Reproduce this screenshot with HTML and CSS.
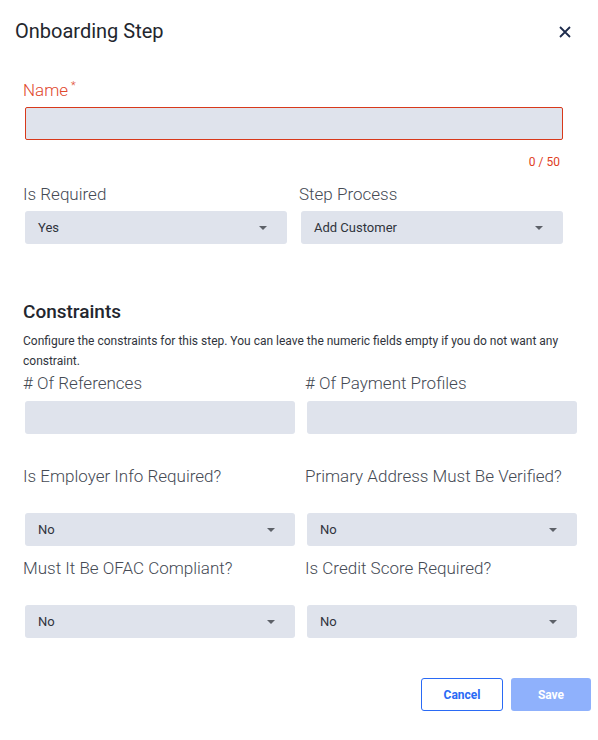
FILE: index.html
```html
<!DOCTYPE html>
<html lang="en">
<head>
<meta charset="utf-8">
<title>Onboarding Step</title>
<link rel="stylesheet" href="styles.css">
</head>
<body>
<div class="dialog">
  <div class="header">
    <h1 class="title">Onboarding Step</h1>
    <button class="close" aria-label="Close">
      <svg width="12" height="12" viewBox="0 0 12 12"><path d="M1 1 L11 11 M11 1 L1 11" stroke="#1d2b4c" stroke-width="1.8" fill="none"/></svg>
    </button>
  </div>

  <div class="top">
    <label class="label label-error">Name<span class="req">*</span></label>
    <div class="input input-error"></div>
    <div class="counter">0 / 50</div>

    <div class="row2">
      <div class="field">
        <label class="label">Is Required</label>
        <div class="select"><span>Yes</span><i class="caret"></i></div>
      </div>
      <div class="field">
        <label class="label">Step Process</label>
        <div class="select"><span>Add Customer</span><i class="caret"></i></div>
      </div>
    </div>
  </div>

  <div class="constraints">
    <h2 class="heading">Constraints</h2>
    <p class="desc">Configure the constraints for this step. You can leave the numeric fields empty if you do not want any constraint.</p>

    <div class="grid">
      <div class="field">
        <label class="label">#&nbsp;Of References</label>
        <div class="input"></div>
      </div>
      <div class="field">
        <label class="label">#&nbsp;Of Payment Profiles</label>
        <div class="input"></div>
      </div>
    </div>

    <div class="grid grid-q first-q">
      <div class="field">
        <label class="label label-q">Is Employer Info Required?</label>
        <div class="select"><span>No</span><i class="caret"></i></div>
      </div>
      <div class="field">
        <label class="label label-q">Primary Address Must Be Verified?</label>
        <div class="select"><span>No</span><i class="caret"></i></div>
      </div>
    </div>

    <div class="grid grid-q">
      <div class="field">
        <label class="label label-q">Must It Be OFAC Compliant?</label>
        <div class="select"><span>No</span><i class="caret"></i></div>
      </div>
      <div class="field">
        <label class="label label-q">Is Credit Score Required?</label>
        <div class="select"><span>No</span><i class="caret"></i></div>
      </div>
    </div>
  </div>

  <div class="actions">
    <button class="btn btn-cancel">Cancel</button>
    <button class="btn btn-save">Save</button>
  </div>
</div>
</body>
</html>
```

FILE: styles.css
```css
* { box-sizing: border-box; }
html, body { margin: 0; padding: 0; background: #ffffff; }
body {
  font-family: Roboto, "Liberation Sans", Arial, sans-serif;
  color: #2b2f38;
  width: 598px;
  height: 740px;
  overflow: hidden;
}
.dialog { padding-top: 19px; }

.header {
  display: flex;
  align-items: center;
  justify-content: space-between;
  height: 24px;
  padding: 0 27px 0 15px;
}
.title {
  margin: 0;
  font-size: 20px;
  line-height: 24px;
  font-weight: 400;
  color: #23262e;
}
.close {
  border: 0;
  background: transparent;
  padding: 0;
  width: 12px;
  height: 12px;
  display: flex;
  margin-top: 2px;
}

.top { padding: 0 35px 0 23px; margin-top: 36px; }

.label {
  display: block;
  font-size: 17px;
  line-height: 22px;
  font-weight: 300;
  color: #454a54;
  white-space: nowrap;
}
.label-error { color: #e0482c; }
.req { font-size: 11px; vertical-align: top; margin-left: 3px; line-height: 14px; }

.input {
  height: 33px;
  margin: 5px 0 0 2px;
  background: #dfe3ec;
  border-radius: 3px;
}
.input-error { border: 1px solid #d8391b; border-radius: 2px; margin-top: 6px; }

.counter {
  margin-top: 15px;
  text-align: right;
  font-size: 12px;
  line-height: 14px;
  color: #e0401e;
  padding-right: 3px;
}

.row2 {
  display: grid;
  grid-template-columns: 1fr 1fr;
  column-gap: 12px;
  margin-top: 14px;
}
.row2 .select { margin-top: 6px; }

.select {
  height: 33px;
  margin: 5px 0 0 2px;
  background: #dfe3ec;
  border-radius: 3px;
  display: flex;
  align-items: center;
  justify-content: space-between;
  padding: 0 20px 0 13px;
  font-size: 13px;
  color: #30343c;
}
.caret {
  width: 0;
  height: 0;
  border-left: 4.5px solid transparent;
  border-right: 4.5px solid transparent;
  border-top: 4.5px solid #5d6168;
}

.constraints { padding: 0 21px 0 23px; margin-top: 56px; }
.heading {
  margin: 0;
  font-size: 19px;
  line-height: 24px;
  font-weight: 500;
  color: #23262e;
}
.desc {
  margin: 7px 0 1px 0;
  font-size: 12px;
  line-height: 20px;
  color: #30343c;
}
.grid {
  display: grid;
  grid-template-columns: 1fr 1fr;
  column-gap: 10px;
}
.grid .input { margin-top: 7px; }
.grid-q { margin-top: 11px; }
.first-q { margin-top: 31px; }
.grid-q .select { margin-top: 26px; }

.actions {
  display: flex;
  justify-content: flex-end;
  gap: 8px;
  padding-right: 7px;
  margin-top: 40px;
}
.btn {
  height: 33px;
  border-radius: 3px;
  font-family: Roboto, "Liberation Sans", Arial, sans-serif;
  font-size: 12px;
  font-weight: 700;
  padding: 0;
}
.btn-cancel {
  width: 82px;
  background: #ffffff;
  border: 1px solid #2a6af5;
  color: #2a6af5;
}
.btn-save {
  width: 80px;
  background: #8fb1fc;
  border: 0;
  color: #ffffff;
}
```
